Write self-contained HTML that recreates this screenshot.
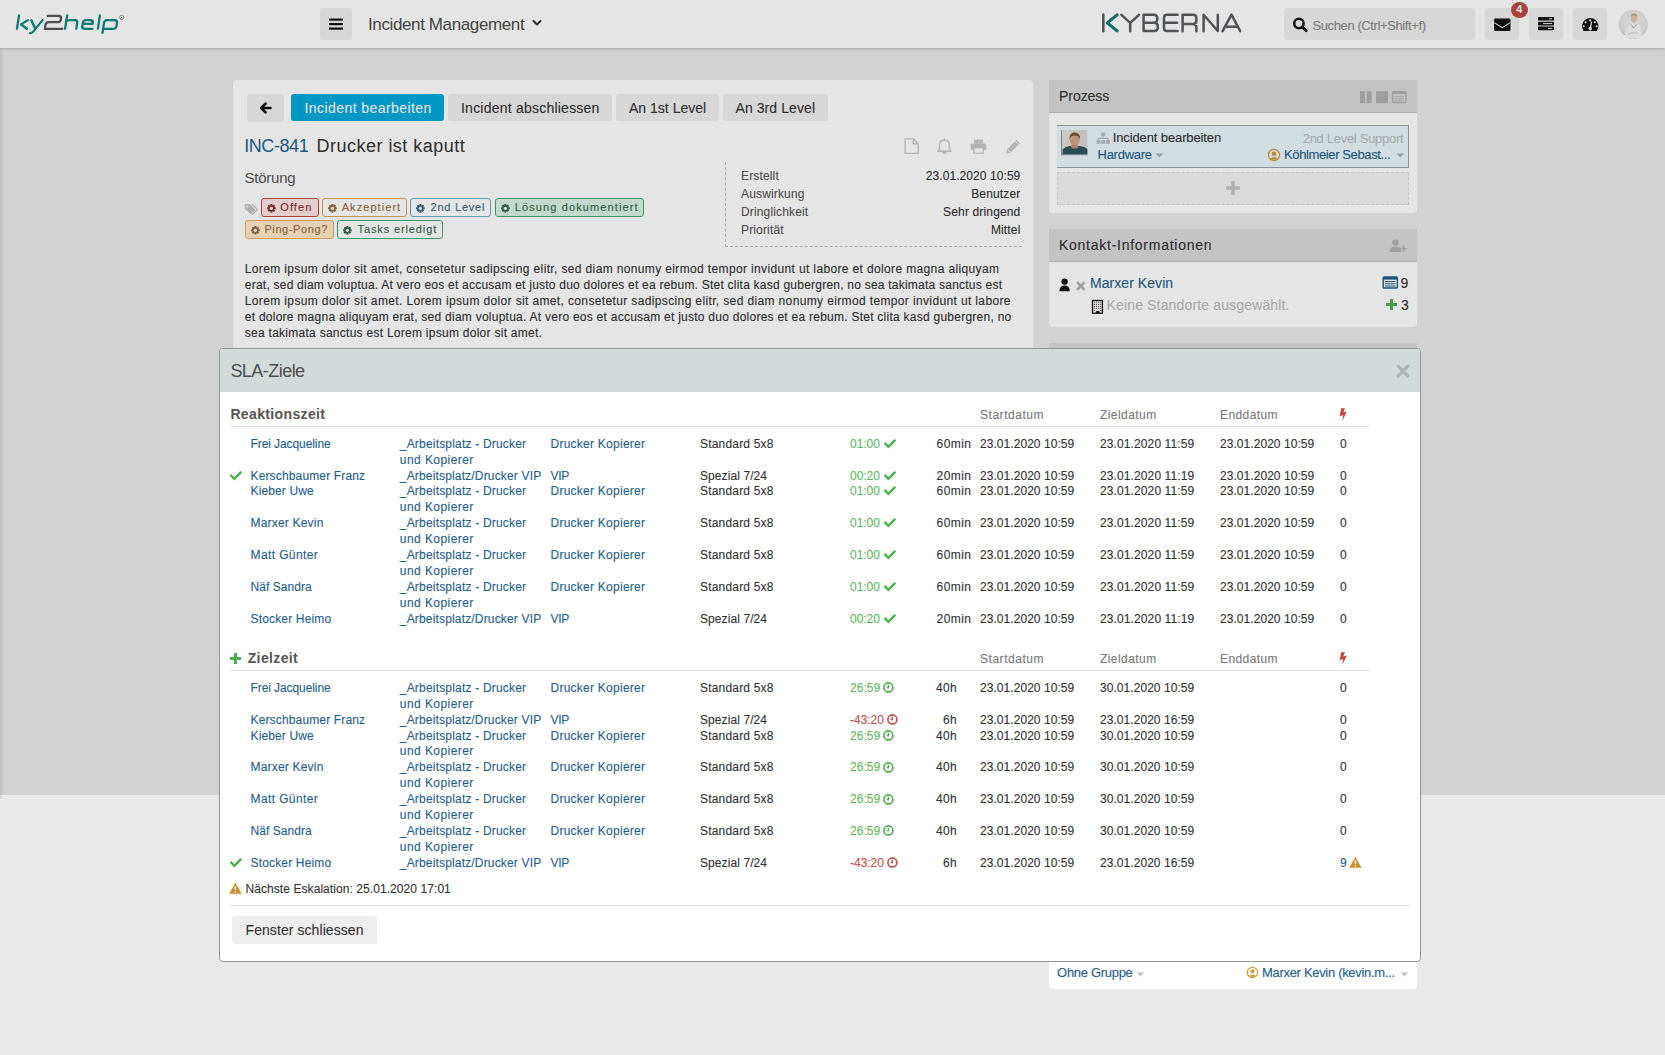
<!DOCTYPE html>
<html><head><meta charset="utf-8"><title>SLA-Ziele</title>
<style>
html,body{margin:0;padding:0;}
body{width:1665px;height:1055px;overflow:hidden;position:relative;background:#eaeaea;font-family:"Liberation Sans", sans-serif;}
.a{position:absolute;}
.t{white-space:pre;}
.s{-webkit-text-stroke:0.1px currentColor;}
svg.a{overflow:visible;}

</style></head><body>
<div class="a" style="left:0px;top:48px;width:4px;height:751px;background:linear-gradient(to right, rgba(0,0,0,0.09), rgba(0,0,0,0));"></div>
<div class="a" style="left:0px;top:0px;width:1665px;height:48px;background:#fff;box-shadow:0 1px 3px rgba(0,0,0,0.2);"></div>
<svg class="a" style="left:0px;top:0px;" width="130" height="48" viewBox="0 0 130 48"><g transform="matrix(1,0,-0.15,1,4.41,0)" fill="none" stroke-width="2.3" stroke-linecap="round" stroke-linejoin="round"><g stroke="#0d877c"><path d="M16.9,15.4 V28.8"/><path d="M26.4,20.2 L20.2,24.4 L26.8,28.8"/><path d="M29.9,20.2 L35,28.3"/><path d="M41.2,20.2 L33.6,31.7 Q32.6,33.1 30.6,33.1"/><path d="M65,15.4 V28.8 M65,21.5 Q66,20.2 68,20.2 H73.6 Q76.2,20.2 76.2,22.8 V28.8"/><path d="M81.8,23.8 H91.8 V22.9 Q91.8,20.2 89.1,20.2 H84.6 Q81.8,20.2 81.8,22.9 V26.1 Q81.8,28.8 84.6,28.8 H92.4"/><path d="M97.8,15.4 V28.8"/><path d="M103,32.9 V22.9 Q103,20.2 105.8,20.2 H113.2 Q116,20.2 116,22.9 V26.1 Q116,28.8 113.2,28.8 H103.2"/></g><path stroke="#565656" d="M45.6,15.8 H56.4 Q59.4,15.8 59.4,18.6 V19.4 Q59.4,22.2 56.4,22.2 H47.8 Q44.8,22.2 44.8,25.2 V28.9 H62.2"/></g><circle cx="121.6" cy="17.4" r="2.1" fill="none" stroke="#888" stroke-width="0.9"/><circle cx="121.6" cy="17.4" r="0.6" fill="#888"/></svg>
<div class="a" style="left:320px;top:8px;width:32px;height:32px;background:#f0f0f0;border-radius:3px;"></div>
<svg class="a" style="left:320px;top:8px;" width="32" height="32" viewBox="0 0 32 32"><rect x="9" y="10.5" width="14" height="2.2" fill="#111"/><rect x="9" y="15" width="14" height="2.2" fill="#111"/><rect x="9" y="19.5" width="14" height="2.2" fill="#111"/></svg>
<div class="a t" style="left:368.00px;top:14.600000000000001px;font-size:17px;line-height:20px;color:#4a4a4a;letter-spacing:-0.383px;">Incident Management</div>
<svg class="a" style="left:530px;top:16px;" width="14" height="14" viewBox="0 0 14 14"><path d="M3.5,5 L7,8.5 L10.5,5" fill="none" stroke="#333" stroke-width="2" stroke-linecap="round" stroke-linejoin="round"/></svg>
<svg class="a" style="left:0px;top:0px;pointer-events:none;" width="1665" height="48" viewBox="0 0 1665 48"><g fill="none" stroke="#5a5c5f" stroke-width="2.5" stroke-linecap="round" stroke-linejoin="round"><path d="M1103.3,14.6 V31.2"/><path d="M1121.4,14.8 L1130.2,22.9 L1139,14.8 M1130.2,22.9 V31.2"/><path d="M1143.6,14.8 V30.9 H1154 Q1157.8,30.9 1157.8,27.2 V26.5 Q1157.8,22.7 1154,22.7 H1143.6 M1143.6,14.8 H1153.8 Q1157.3,14.8 1157.3,18.3 V19.2 Q1157.3,22.7 1153.8,22.7"/><path d="M1177.6,14.8 H1167 Q1164,14.8 1164,17.8 V27.9 Q1164,30.9 1167,30.9 H1177.6 M1164,22.7 H1177.2"/><path d="M1182.6,31.2 V14.8 H1193 Q1196.4,14.8 1196.4,18.2 V20.4 Q1196.4,23.9 1193,23.9 H1182.6 M1192.6,23.9 Q1196.4,23.9 1196.4,27.4 V31.2"/><path d="M1203.6,31.2 V14.8 L1217.8,31 V14.8"/><path d="M1222.6,31.2 L1231.5,14.6 L1240.2,31.2 M1225.2,26.8 H1237.6"/></g><path d="M1117.1,14.9 L1107.3,22.9 L1117.1,30.9" fill="none" stroke="#0b7a70" stroke-width="3.1" stroke-linecap="round" stroke-linejoin="round"/></svg>
<div class="a" style="left:1284px;top:8px;width:191px;height:32px;background:#f0f0f0;border-radius:3px;"></div>
<svg class="a" style="left:1290px;top:14px;" width="22" height="22" viewBox="0 0 22 22"><circle cx="8.9" cy="9.5" r="4.7" fill="none" stroke="#111" stroke-width="2.5"/><path d="M12.3,12.9 L16.2,16.8" stroke="#111" stroke-width="2.8" stroke-linecap="round"/></svg>
<div class="a t s" style="left:1312.50px;top:16px;font-size:13px;line-height:20px;color:#888;letter-spacing:-0.395px;">Suchen (Ctrl+Shift+f)</div>
<div class="a" style="left:1485px;top:8px;width:34px;height:32px;background:#f0f0f0;border-radius:3px;"></div>
<div class="a" style="left:1529px;top:8px;width:34px;height:32px;background:#f0f0f0;border-radius:3px;"></div>
<div class="a" style="left:1573px;top:8px;width:34px;height:32px;background:#f0f0f0;border-radius:3px;"></div>
<svg class="a" style="left:1494px;top:18px;" width="17" height="14" viewBox="0 0 17 14"><rect x="0" y="0.5" width="16.5" height="12.5" rx="1.2" fill="#111"/><path d="M0.2,4.6 L8.25,9.6 L16.3,4.6" fill="none" stroke="#f0f0f0" stroke-width="1.1"/></svg>
<div class="a" style="left:1510.6px;top:1.9px;width:17.4px;height:16.2px;border-radius:50%;background:#b94a48;"></div>
<div class="a t" style="left:1516.34px;top:-1px;font-size:11px;line-height:20px;color:#fff;font-weight:700;">4</div>
<svg class="a" style="left:1538px;top:17px;" width="17" height="14" viewBox="0 0 17 14"><rect x="0" y="0" width="16" height="3.6" rx="0.6" fill="#111"/><rect x="0" y="4.8" width="16" height="3.6" rx="0.6" fill="#111"/><rect x="0" y="9.6" width="16" height="3.6" rx="0.6" fill="#111"/><path d="M11,1.8 H14 M5,6.6 H14 M10,11.4 H14" stroke="#f0f0f0" stroke-width="1"/></svg>
<svg class="a" style="left:1581px;top:17px;" width="19" height="15" viewBox="0 0 19 15"><path d="M2.55,14 A8.2,8.2 0 1 1 15.85,14 Z" fill="#111"/><circle cx="9.2" cy="3.4" r="1.05" fill="#f0f0f0"/><circle cx="4.6" cy="5.2" r="1.05" fill="#f0f0f0"/><circle cx="13.8" cy="5.2" r="1.05" fill="#f0f0f0"/><circle cx="2.8" cy="9.2" r="1.05" fill="#f0f0f0"/><circle cx="15.6" cy="9.2" r="1.05" fill="#f0f0f0"/><path d="M9.2,11.6 L10.6,4.6" stroke="#f0f0f0" stroke-width="1.3"/><circle cx="9.2" cy="11.6" r="1.8" fill="#f0f0f0"/></svg>
<svg class="a" style="left:1618px;top:9px;" width="31" height="31" viewBox="0 0 31 31"><defs><radialGradient id="avg" cx="50%" cy="45%" r="55%"><stop offset="0" stop-color="#f2f2f2"/><stop offset="0.75" stop-color="#e6e6e6"/><stop offset="1" stop-color="#d2d2d2"/></radialGradient></defs><circle cx="15.3" cy="15.4" r="14.4" fill="url(#avg)"/><path d="M6.8,27.4 Q7.6,16.6 12.6,15.2 H19.4 Q23.6,16.6 24,27.6 Q15.6,31.6 6.8,27.4 Z" fill="#f6f6f6"/><path d="M12.8,15.4 L15.6,19 L18.6,15.4" fill="none" stroke="#a8a098" stroke-width="0.8"/><ellipse cx="16" cy="9.4" rx="3.2" ry="4" fill="#e0c4b0"/><path d="M12.6,8.6 Q12.4,4.6 16,4.4 Q19.6,4.6 19.4,8.8 Q18.6,6.2 16,6.2 Q13.4,6.2 12.6,8.6 Z" fill="#b8a48c"/><path d="M9.8,25.6 Q14,22.4 20,24.4" fill="none" stroke="#d6d6d6" stroke-width="1.4"/></svg>
<div class="a" style="left:233px;top:80px;width:800px;height:880px;background:#fff;border-radius:4px;"></div>
<div class="a" style="left:247px;top:94px;width:37px;height:28px;background:#f0f0f0;border-radius:3px;"></div>
<svg class="a" style="left:257px;top:100px;" width="17" height="16" viewBox="0 0 17 16"><path d="M13.5,8 H4.5 M8.6,3.6 L4.2,8 L8.6,12.4" fill="none" stroke="#111" stroke-width="2.6" stroke-linecap="round" stroke-linejoin="round"/></svg>
<div class="a" style="left:291px;top:94px;width:153px;height:27px;background:#00a9db;border-radius:3px;"></div>
<div class="a t s" style="left:304.50px;top:98px;font-size:14px;line-height:20px;color:#fff;letter-spacing:0.428px;">Incident bearbeiten</div>
<div class="a" style="left:448px;top:94px;width:164px;height:27px;background:#f0f0f0;border-radius:3px;"></div>
<div class="a t s" style="left:461.00px;top:98px;font-size:14px;line-height:20px;color:#303030;letter-spacing:0.226px;">Incident abschliessen</div>
<div class="a" style="left:616px;top:94px;width:103px;height:27px;background:#f0f0f0;border-radius:3px;"></div>
<div class="a t s" style="left:629.00px;top:98px;font-size:14px;line-height:20px;color:#303030;letter-spacing:0.013px;">An 1st Level</div>
<div class="a" style="left:723px;top:94px;width:105px;height:27px;background:#f0f0f0;border-radius:3px;"></div>
<div class="a t s" style="left:735.50px;top:98px;font-size:14px;line-height:20px;color:#303030;letter-spacing:0.081px;">An 3rd Level</div>
<div class="a t" style="left:244.20px;top:135.7px;font-size:18px;line-height:20px;color:#1a6496;letter-spacing:-0.422px;">INC-841</div>
<div class="a t" style="left:316.60px;top:135.7px;font-size:18px;line-height:20px;color:#333;letter-spacing:0.474px;">Drucker ist kaputt</div>
<svg class="a" style="left:904px;top:138px;" width="16" height="17" viewBox="0 0 16 17"><path d="M1.2,0.9 H9.6 L14.2,5.5 V15.4 H1.2 Z M9.4,1 V5.7 H14" fill="none" stroke="#c8c8c8" stroke-width="1.4" stroke-linejoin="round"/></svg>
<svg class="a" style="left:936px;top:137px;" width="17" height="18" viewBox="0 0 17 18"><path d="M8.4,1.2 V2.4 M3.4,12.6 V8 Q3.4,3.2 8.4,3.2 Q13.4,3.2 13.4,8 V12.6 L15,14.2 H1.8 Z M6.6,15 Q8.4,17.4 10.2,15" fill="none" stroke="#c8c8c8" stroke-width="1.4" stroke-linejoin="round"/></svg>
<svg class="a" style="left:970px;top:139px;" width="18" height="15" viewBox="0 0 18 15"><rect x="4" y="0.6" width="9" height="4" fill="#c8c8c8"/><rect x="0.8" y="4.4" width="15.4" height="6.8" rx="1.4" fill="#c8c8c8"/><rect x="3.8" y="8.8" width="9.4" height="5.4" fill="#fff" stroke="#c8c8c8" stroke-width="1.2"/></svg>
<svg class="a" style="left:1005px;top:138px;" width="17" height="17" viewBox="0 0 17 17"><path d="M1.4,15.4 L2.2,11.2 L11.6,1.8 L15,5.2 L5.6,14.6 Z" fill="#c8c8c8"/><path d="M2.4,11.4 L5.4,14.4 M10.2,3.2 L13.6,6.6" stroke="#fff" stroke-width="0.8"/></svg>
<div class="a t" style="left:244.60px;top:168.1px;font-size:15px;line-height:20px;color:#555;letter-spacing:-0.258px;">Störung</div>
<div class="a" style="left:725px;top:162px;width:296px;height:84px;border-left:1px dashed #bbb;border-bottom:1px dashed #bbb;"></div>
<div class="a t s" style="left:741.00px;top:166.0px;font-size:12px;line-height:20px;color:#555;letter-spacing:0.150px;">Erstellt</div>
<div class="a t s" style="left:925.80px;top:166.0px;font-size:12px;line-height:20px;color:#303030;letter-spacing:0.072px;">23.01.2020 10:59</div>
<div class="a t s" style="left:741.00px;top:184.0px;font-size:12px;line-height:20px;color:#555;letter-spacing:0.150px;">Auswirkung</div>
<div class="a t s" style="left:971.22px;top:184.0px;font-size:12px;line-height:20px;color:#303030;letter-spacing:0.150px;">Benutzer</div>
<div class="a t s" style="left:741.00px;top:202.0px;font-size:12px;line-height:20px;color:#555;letter-spacing:0.150px;">Dringlichkeit</div>
<div class="a t s" style="left:943.11px;top:202.0px;font-size:12px;line-height:20px;color:#303030;letter-spacing:0.150px;">Sehr dringend</div>
<div class="a t s" style="left:741.00px;top:220.0px;font-size:12px;line-height:20px;color:#555;letter-spacing:0.150px;">Priorität</div>
<div class="a t s" style="left:990.88px;top:220.0px;font-size:12px;line-height:20px;color:#303030;letter-spacing:0.150px;">Mittel</div>
<div class="a" style="left:260.5px;top:198px;width:58.5px;height:19px;background:#fde5e5;border-radius:3px;border:1px solid #c44b48;box-sizing:border-box;"></div>
<svg class="a" style="left:264.5px;top:201px;" width="13" height="13" viewBox="0 0 13 13"><g transform="translate(6.4,7.3)" fill="#86302f"><rect x="-1.05" y="-4.3" width="2.1" height="8.6" transform="rotate(0)" /><rect x="-1.05" y="-4.3" width="2.1" height="8.6" transform="rotate(45)" /><rect x="-1.05" y="-4.3" width="2.1" height="8.6" transform="rotate(90)" /><rect x="-1.05" y="-4.3" width="2.1" height="8.6" transform="rotate(135)" /><circle r="3.0"/><circle r="1.6" fill="#fff"/></g></svg>
<div class="a t s" style="left:280.30px;top:197px;font-size:11px;line-height:20px;color:#86302f;letter-spacing:1.070px;">Offen</div>
<div class="a" style="left:322px;top:198px;width:85px;height:19px;background:#fff;border-radius:3px;border:1px solid #e0a35a;box-sizing:border-box;"></div>
<svg class="a" style="left:326px;top:201px;" width="13" height="13" viewBox="0 0 13 13"><g transform="translate(6.4,7.3)" fill="#97693a"><rect x="-1.05" y="-4.3" width="2.1" height="8.6" transform="rotate(0)" /><rect x="-1.05" y="-4.3" width="2.1" height="8.6" transform="rotate(45)" /><rect x="-1.05" y="-4.3" width="2.1" height="8.6" transform="rotate(90)" /><rect x="-1.05" y="-4.3" width="2.1" height="8.6" transform="rotate(135)" /><circle r="3.0"/><circle r="1.6" fill="#fff"/></g></svg>
<div class="a t s" style="left:341.70px;top:197px;font-size:11px;line-height:20px;color:#97693a;letter-spacing:1.064px;">Akzeptiert</div>
<div class="a" style="left:410.2px;top:198px;width:81.2px;height:19px;background:#fff;border-radius:3px;border:1px solid #68b1c4;box-sizing:border-box;"></div>
<svg class="a" style="left:414.2px;top:201px;" width="13" height="13" viewBox="0 0 13 13"><g transform="translate(6.4,7.3)" fill="#2f6b7c"><rect x="-1.05" y="-4.3" width="2.1" height="8.6" transform="rotate(0)" /><rect x="-1.05" y="-4.3" width="2.1" height="8.6" transform="rotate(45)" /><rect x="-1.05" y="-4.3" width="2.1" height="8.6" transform="rotate(90)" /><rect x="-1.05" y="-4.3" width="2.1" height="8.6" transform="rotate(135)" /><circle r="3.0"/><circle r="1.6" fill="#fff"/></g></svg>
<div class="a t s" style="left:430.50px;top:197px;font-size:11px;line-height:20px;color:#2f6b7c;letter-spacing:0.773px;">2nd Level</div>
<div class="a" style="left:495px;top:198px;width:149px;height:19px;background:#d9f1e4;border-radius:3px;border:1px solid #45ab78;box-sizing:border-box;"></div>
<svg class="a" style="left:499px;top:201px;" width="13" height="13" viewBox="0 0 13 13"><g transform="translate(6.4,7.3)" fill="#2f6447"><rect x="-1.05" y="-4.3" width="2.1" height="8.6" transform="rotate(0)" /><rect x="-1.05" y="-4.3" width="2.1" height="8.6" transform="rotate(45)" /><rect x="-1.05" y="-4.3" width="2.1" height="8.6" transform="rotate(90)" /><rect x="-1.05" y="-4.3" width="2.1" height="8.6" transform="rotate(135)" /><circle r="3.0"/><circle r="1.6" fill="#fff"/></g></svg>
<div class="a t s" style="left:514.80px;top:197px;font-size:11px;line-height:20px;color:#2f6447;letter-spacing:1.109px;">Lösung dokumentiert</div>
<div class="a" style="left:244.6px;top:220px;width:89px;height:19px;background:#ffeacb;border-radius:3px;border:1px solid #e6ab66;box-sizing:border-box;"></div>
<svg class="a" style="left:248.6px;top:223px;" width="13" height="13" viewBox="0 0 13 13"><g transform="translate(6.4,7.3)" fill="#97693a"><rect x="-1.05" y="-4.3" width="2.1" height="8.6" transform="rotate(0)" /><rect x="-1.05" y="-4.3" width="2.1" height="8.6" transform="rotate(45)" /><rect x="-1.05" y="-4.3" width="2.1" height="8.6" transform="rotate(90)" /><rect x="-1.05" y="-4.3" width="2.1" height="8.6" transform="rotate(135)" /><circle r="3.0"/><circle r="1.6" fill="#fff"/></g></svg>
<div class="a t s" style="left:264.40px;top:219px;font-size:11px;line-height:20px;color:#97693a;letter-spacing:0.611px;">Ping-Pong?</div>
<div class="a" style="left:337px;top:220px;width:106.4px;height:19px;background:#fff;border-radius:3px;border:1px solid #45ab78;box-sizing:border-box;"></div>
<svg class="a" style="left:341px;top:223px;" width="13" height="13" viewBox="0 0 13 13"><g transform="translate(6.4,7.3)" fill="#2f6447"><rect x="-1.05" y="-4.3" width="2.1" height="8.6" transform="rotate(0)" /><rect x="-1.05" y="-4.3" width="2.1" height="8.6" transform="rotate(45)" /><rect x="-1.05" y="-4.3" width="2.1" height="8.6" transform="rotate(90)" /><rect x="-1.05" y="-4.3" width="2.1" height="8.6" transform="rotate(135)" /><circle r="3.0"/><circle r="1.6" fill="#fff"/></g></svg>
<div class="a t s" style="left:357.50px;top:219px;font-size:11px;line-height:20px;color:#2f6447;letter-spacing:0.880px;">Tasks erledigt</div>
<svg class="a" style="left:243px;top:202px;" width="16" height="14" viewBox="0 0 16 14"><path d="M1.6,2 H6.6 L12.6,8 L8,12.6 L1.6,6.6 Z" fill="#c4c4c4"/><path d="M9,2 L14.4,7.6 L9.4,12.6" fill="none" stroke="#c4c4c4" stroke-width="1.2"/><circle cx="4.2" cy="4.4" r="1" fill="#fff"/></svg>
<div class="a t s" style="left:244.80px;top:259.0px;font-size:12px;line-height:20px;color:#303030;letter-spacing:0.360px;">Lorem ipsum dolor sit amet, consetetur sadipscing elitr, sed diam nonumy eirmod tempor invidunt ut labore et dolore magna aliquyam</div>
<div class="a t s" style="left:244.80px;top:274.95px;font-size:12px;line-height:20px;color:#303030;letter-spacing:0.228px;">erat, sed diam voluptua. At vero eos et accusam et justo duo dolores et ea rebum. Stet clita kasd gubergren, no sea takimata sanctus est</div>
<div class="a t s" style="left:244.80px;top:290.9px;font-size:12px;line-height:20px;color:#303030;letter-spacing:0.364px;">Lorem ipsum dolor sit amet. Lorem ipsum dolor sit amet, consetetur sadipscing elitr, sed diam nonumy eirmod tempor invidunt ut labore</div>
<div class="a t s" style="left:244.80px;top:306.85px;font-size:12px;line-height:20px;color:#303030;letter-spacing:0.252px;">et dolore magna aliquyam erat, sed diam voluptua. At vero eos et accusam et justo duo dolores et ea rebum. Stet clita kasd gubergren, no</div>
<div class="a t s" style="left:244.80px;top:322.8px;font-size:12px;line-height:20px;color:#303030;letter-spacing:0.268px;">sea takimata sanctus est Lorem ipsum dolor sit amet.</div>
<div class="a" style="left:1049px;top:80px;width:368px;height:132.5px;background:#fff;border-radius:0 0 4px 4px;"></div>
<div class="a" style="left:1049px;top:80px;width:368px;height:33px;background:#dadada;border-bottom:1.5px solid #bfbfbf;box-sizing:border-box;"></div>
<div class="a t s" style="left:1059.00px;top:85.9px;font-size:14px;line-height:20px;color:#303030;letter-spacing:-0.046px;">Prozess</div>
<svg class="a" style="left:1359px;top:90px;" width="50" height="14" viewBox="0 0 50 14"><rect x="1" y="1.2" width="5" height="12" fill="#b0b0b0"/><rect x="7.6" y="1.2" width="5" height="12" fill="#b0b0b0"/><rect x="17" y="1.2" width="12" height="12" fill="#b0b0b0"/><rect x="33.6" y="1.6" width="13.4" height="11" rx="1" fill="none" stroke="#b0b0b0" stroke-width="1.4"/><rect x="33.6" y="1.6" width="13.4" height="2.4" fill="#b0b0b0"/><path d="M35.6,6.4 H45 M35.6,8.6 H45 M35.6,10.8 H45" stroke="#b0b0b0" stroke-width="0.9"/></svg>
<div class="a" style="left:1057px;top:125px;width:352px;height:43px;box-sizing:border-box;background:#eaf7fc;border:1px solid #9da2a5;border-left:none;"></div>
<svg class="a" style="left:1061px;top:130px;" width="27" height="25" viewBox="0 0 27 25"><defs><linearGradient id="phbg" x1="0" x2="1"><stop offset="0" stop-color="#e6e2dc"/><stop offset="1" stop-color="#d8d6d0"/></linearGradient></defs><rect x="1.4" y="0" width="25" height="24.4" fill="url(#phbg)"/><rect x="0" y="0" width="1.2" height="25.2" fill="#8d9194"/><rect x="0" y="24.2" width="26.5" height="1" fill="#8d9194"/><path d="M1.6,24.2 V19.2 Q4,16.6 9,16 H18.6 Q24,16.6 26.4,19 V24.2 Z" fill="#2f5560"/><path d="M10.8,14 H16.4 L17.4,17.4 Q13.6,19.8 9.8,17.4 Z" fill="#c0907a"/><ellipse cx="13.6" cy="9.6" rx="5" ry="6.2" fill="#d2a48a"/><path d="M8.4,9.4 Q7.8,3 13.6,2.6 Q19.6,3 19,9.6 Q18,5.8 13.8,5.6 Q9.6,5.6 8.4,9.4 Z" fill="#7a5236"/></svg>
<svg class="a" style="left:1096px;top:132px;" width="15" height="13" viewBox="0 0 15 13"><rect x="5.2" y="0.6" width="4" height="3.4" fill="#b8bcbe"/><path d="M7.2,4 V6.4 M2.4,8 V6.4 H12 V8" fill="none" stroke="#b8bcbe" stroke-width="1.2"/><rect x="0.6" y="8.2" width="3.8" height="3.6" fill="#b8bcbe"/><rect x="5.2" y="8.2" width="4" height="3.6" fill="#b8bcbe"/><rect x="10" y="8.2" width="3.8" height="3.6" fill="#b8bcbe"/></svg>
<div class="a t s" style="left:1112.70px;top:128px;font-size:13px;line-height:20px;color:#303030;letter-spacing:-0.116px;">Incident bearbeiten</div>
<div class="a t s" style="left:1097.50px;top:144.9px;font-size:13px;line-height:20px;color:#1d5d8d;letter-spacing:-0.251px;">Hardware</div>
<svg class="a" style="left:1155px;top:153px;" width="9" height="5" viewBox="0 0 9 5"><path d="M0.6,0.6 H8.2 L4.4,4.4 Z" fill="#a9b0b4"/></svg>
<div class="a t s" style="left:1302.70px;top:129px;font-size:13px;line-height:20px;color:#b9bdbf;letter-spacing:-0.289px;">2nd Level Support</div>
<svg class="a" style="left:1266px;top:147px;" width="16" height="16" viewBox="0 0 16 16"><circle cx="8" cy="8" r="5.6000000000000005" fill="none" stroke="#d19a38" stroke-width="1.2"/><circle cx="8" cy="6.636" r="2.2319999999999998" fill="#d19a38"/><path d="M4.156000000000001,11.844 Q8,8.31 11.844,11.844 Q8,13.89 4.156000000000001,11.844 Z" fill="#d19a38"/></svg>
<div class="a t s" style="left:1284.00px;top:144.9px;font-size:13px;line-height:20px;color:#1d5d8d;letter-spacing:-0.381px;">Köhlmeier Sebast...</div>
<svg class="a" style="left:1396px;top:153px;" width="9" height="5" viewBox="0 0 9 5"><path d="M0.6,0.6 H8.2 L4.4,4.4 Z" fill="#a9b0b4"/></svg>
<div class="a" style="left:1057px;top:172px;width:352px;height:32.5px;background:#f3f3f3;border:1px dashed #dadada;box-sizing:border-box;"></div>
<svg class="a" style="left:1225px;top:180px;" width="16" height="16" viewBox="0 0 16 16"><path d="M8,1 V15 M1,8 H15" stroke="#c2c2c2" stroke-width="3.6"/></svg>
<div class="a" style="left:1049px;top:229px;width:368px;height:97.6px;background:#fff;border-radius:0 0 4px 4px;"></div>
<div class="a" style="left:1049px;top:229px;width:368px;height:33px;background:#dadada;border-bottom:1.5px solid #bfbfbf;box-sizing:border-box;"></div>
<div class="a t s" style="left:1059.00px;top:234.9px;font-size:14px;line-height:20px;color:#303030;letter-spacing:0.738px;">Kontakt-Informationen</div>
<svg class="a" style="left:1389px;top:239px;" width="19" height="14" viewBox="0 0 19 14"><circle cx="6.4" cy="3.6" r="3.2" fill="#b0b0b0"/><path d="M0.6,13 Q0.6,7.6 6.4,7.6 Q12.2,7.6 12.2,13 Z" fill="#b0b0b0"/><path d="M14.6,6.4 V12.6 M11.5,9.5 H17.7" stroke="#b0b0b0" stroke-width="1.6"/></svg>
<svg class="a" style="left:1059px;top:278px;" width="12" height="14" viewBox="0 0 12 14"><circle cx="5.6" cy="3.6" r="3.2" fill="#111"/><path d="M0.4,13.2 Q0.4,7.4 5.6,7.4 Q10.8,7.4 10.8,13.2 Z" fill="#111"/></svg>
<svg class="a" style="left:1075px;top:280px;" width="12" height="12" viewBox="0 0 12 12"><path d="M2,2.2 L9.6,9.8 M9.6,2.2 L2,9.8" stroke="#b0b0b0" stroke-width="2.6"/></svg>
<div class="a t s" style="left:1090.00px;top:273px;font-size:14px;line-height:20px;color:#1d5d8d;letter-spacing:0.057px;">Marxer Kevin</div>
<svg class="a" style="left:1382px;top:276px;" width="17" height="13" viewBox="0 0 17 13"><rect x="1.2" y="1" width="14.2" height="11" rx="1" fill="none" stroke="#1d5d8d" stroke-width="1.4"/><rect x="1.2" y="1" width="14.2" height="2.6" fill="#1d5d8d"/><path d="M3,5.6 H13.6 M3,7.8 H13.6 M3,10 H13.6" stroke="#1d5d8d" stroke-width="1"/></svg>
<div class="a t s" style="left:1400.50px;top:273px;font-size:14px;line-height:20px;color:#303030;">9</div>
<svg class="a" style="left:1091px;top:299px;" width="13" height="16" viewBox="0 0 13 16"><rect x="1.5" y="1.5" width="9.9" height="12.7" fill="#fff" stroke="#111" stroke-width="1.3"/><rect x="2.95" y="2.6500000000000004" width="1.1" height="1.1" fill="#6a4a4a"/><rect x="2.95" y="4.8500000000000005" width="1.1" height="1.1" fill="#6a4a4a"/><rect x="2.95" y="6.8500000000000005" width="1.1" height="1.1" fill="#6a4a4a"/><rect x="2.95" y="8.75" width="1.1" height="1.1" fill="#6a4a4a"/><rect x="4.95" y="2.6500000000000004" width="1.1" height="1.1" fill="#6a4a4a"/><rect x="4.95" y="4.8500000000000005" width="1.1" height="1.1" fill="#6a4a4a"/><rect x="4.95" y="6.8500000000000005" width="1.1" height="1.1" fill="#6a4a4a"/><rect x="4.95" y="8.75" width="1.1" height="1.1" fill="#6a4a4a"/><rect x="6.95" y="2.6500000000000004" width="1.1" height="1.1" fill="#6a4a4a"/><rect x="6.95" y="4.8500000000000005" width="1.1" height="1.1" fill="#6a4a4a"/><rect x="6.95" y="6.8500000000000005" width="1.1" height="1.1" fill="#6a4a4a"/><rect x="6.95" y="8.75" width="1.1" height="1.1" fill="#6a4a4a"/><rect x="9.049999999999999" y="2.6500000000000004" width="1.1" height="1.1" fill="#6a4a4a"/><rect x="9.049999999999999" y="4.8500000000000005" width="1.1" height="1.1" fill="#6a4a4a"/><rect x="9.049999999999999" y="6.8500000000000005" width="1.1" height="1.1" fill="#6a4a4a"/><rect x="9.049999999999999" y="8.75" width="1.1" height="1.1" fill="#6a4a4a"/><rect x="2.95" y="10.9" width="1.1" height="1.1" fill="#6a4a4a"/><rect x="9.049999999999999" y="10.9" width="1.1" height="1.1" fill="#6a4a4a"/><rect x="5.1" y="12" width="3.4" height="2.4" fill="#111"/></svg>
<div class="a t s" style="left:1106.50px;top:294.8px;font-size:14px;line-height:20px;color:#bcbcbc;letter-spacing:0.153px;">Keine Standorte ausgewählt.</div>
<svg class="a" style="left:1385px;top:298px;" width="13" height="13" viewBox="0 0 13 13"><path d="M6.5,1 V12 M1,6.5 H12" stroke="#4cae4c" stroke-width="3"/></svg>
<div class="a t s" style="left:1401.00px;top:295px;font-size:14px;line-height:20px;color:#303030;">3</div>
<div class="a" style="left:1049px;top:343px;width:368px;height:645.6px;background:#fff;border-radius:0 0 4px 4px;"></div>
<div class="a" style="left:1049px;top:343px;width:368px;height:33px;background:#dadada;"></div>
<div class="a t s" style="left:1057.10px;top:962.5px;font-size:13px;line-height:20px;color:#1d5d8d;letter-spacing:-0.308px;">Ohne Gruppe</div>
<svg class="a" style="left:1136.4px;top:972px;" width="9" height="5" viewBox="0 0 9 5"><path d="M0.6,0.6 H8.2 L4.4,4.4 Z" fill="#c0c0c0"/></svg>
<svg class="a" style="left:1245px;top:965px;" width="15" height="15" viewBox="0 0 15 15"><circle cx="7.5" cy="7.5" r="5.2" fill="none" stroke="#d19a38" stroke-width="1.2"/><circle cx="7.5" cy="6.224" r="2.088" fill="#d19a38"/><path d="M3.904,11.096 Q7.5,7.79 11.096,11.096 Q7.5,13.01 3.904,11.096 Z" fill="#d19a38"/></svg>
<div class="a t s" style="left:1262.00px;top:962.5px;font-size:13px;line-height:20px;color:#1d5d8d;letter-spacing:-0.311px;">Marxer Kevin (kevin.m...</div>
<svg class="a" style="left:1400.4px;top:972px;" width="9" height="5" viewBox="0 0 9 5"><path d="M0.6,0.6 H8.2 L4.4,4.4 Z" fill="#c0c0c0"/></svg>
<div class="a" style="left:0px;top:0px;width:1665px;height:795px;background:rgba(0,0,0,0.1);"></div>
<div class="a" style="left:219px;top:348px;width:1202px;height:614px;box-sizing:border-box;border:1px solid #949494;border-radius:4px;background:#fff;overflow:hidden;"><div style="position:absolute;left:0;top:0;right:0;height:43px;background:#d2dbda;"></div></div>
<div class="a t" style="left:230.40px;top:360.8px;font-size:18px;line-height:20px;color:#4d4d4d;letter-spacing:-0.541px;">SLA-Ziele</div>
<svg class="a" style="left:1396px;top:364px;" width="14" height="14" viewBox="0 0 14 14"><path d="M2.2,2.2 L11.8,11.8 M11.8,2.2 L2.2,11.8" stroke="#abb3b3" stroke-width="3.2" stroke-linecap="round"/></svg>
<div class="a t" style="left:230.40px;top:403.8px;font-size:14px;line-height:20px;color:#555;font-weight:700;letter-spacing:0.362px;">Reaktionszeit</div>
<div class="a t s" style="left:980.00px;top:405.0px;font-size:12px;line-height:20px;color:#777;letter-spacing:0.533px;">Startdatum</div>
<div class="a t s" style="left:1100.00px;top:405.0px;font-size:12px;line-height:20px;color:#777;letter-spacing:0.439px;">Zieldatum</div>
<div class="a t s" style="left:1220.00px;top:405.0px;font-size:12px;line-height:20px;color:#777;letter-spacing:0.400px;">Enddatum</div>
<svg class="a" style="left:1339px;top:407.8px;" width="9" height="14" viewBox="0 0 9 14"><path d="M2.2,0.2 L5.9,0.2 L4.3,4.6 L7.9,3.5 L3.1,13.3 L4.3,7.2 L0.6,8.0 Z" fill="#c9413c"/></svg>
<div class="a" style="left:230px;top:425.8px;width:1140px;height:1.2px;background:#dddddd;"></div>
<div class="a t s" style="left:250.50px;top:433.7px;font-size:12px;line-height:20px;color:#1d5d8d;letter-spacing:-0.084px;">Frei Jacqueline</div>
<div class="a t s" style="left:399.80px;top:433.7px;font-size:12px;line-height:20px;color:#1d5d8d;letter-spacing:0.193px;">_Arbeitsplatz - Drucker</div>
<div class="a t s" style="left:399.80px;top:449.59999999999997px;font-size:12px;line-height:20px;color:#1d5d8d;letter-spacing:0.435px;">und Kopierer</div>
<div class="a t s" style="left:550.50px;top:433.7px;font-size:12px;line-height:20px;color:#1d5d8d;letter-spacing:0.253px;">Drucker Kopierer</div>
<div class="a t s" style="left:700.00px;top:433.7px;font-size:12px;line-height:20px;color:#303030;letter-spacing:0.183px;">Standard 5x8</div>
<div class="a t s" style="left:850.10px;top:433.7px;font-size:12px;line-height:20px;color:#5cb85c;letter-spacing:-0.058px;">01:00</div>
<svg class="a" style="left:883.6px;top:438.7px;" width="12" height="10" viewBox="0 0 12 10"><path d="M1.4,4.8 L4.4,7.8 L10.4,1.8" fill="none" stroke="#4cae4c" stroke-width="2.5" stroke-linecap="square"/></svg>
<div class="a t s" style="left:936.60px;top:433.7px;font-size:12px;line-height:20px;color:#303030;letter-spacing:0.428px;">60min</div>
<div class="a t s" style="left:980.00px;top:433.7px;font-size:12px;line-height:20px;color:#303030;letter-spacing:0.052px;">23.01.2020 10:59</div>
<div class="a t s" style="left:1100.00px;top:433.7px;font-size:12px;line-height:20px;color:#303030;letter-spacing:0.111px;">23.01.2020 11:59</div>
<div class="a t s" style="left:1220.00px;top:433.7px;font-size:12px;line-height:20px;color:#303030;letter-spacing:0.052px;">23.01.2020 10:59</div>
<div class="a t s" style="left:1340.00px;top:433.7px;font-size:12px;line-height:20px;color:#303030;">0</div>
<svg class="a" style="left:230px;top:470.5px;" width="12" height="10" viewBox="0 0 12 10"><path d="M1.4,4.8 L4.4,7.8 L10.4,1.8" fill="none" stroke="#4cae4c" stroke-width="2.5" stroke-linecap="square"/></svg>
<div class="a t s" style="left:250.50px;top:465.5px;font-size:12px;line-height:20px;color:#1d5d8d;letter-spacing:0.150px;">Kerschbaumer Franz</div>
<div class="a t s" style="left:399.80px;top:465.5px;font-size:12px;line-height:20px;color:#1d5d8d;letter-spacing:0.167px;">_Arbeitsplatz/Drucker VIP</div>
<div class="a t s" style="left:550.50px;top:465.5px;font-size:12px;line-height:20px;color:#1d5d8d;letter-spacing:-0.272px;">VIP</div>
<div class="a t s" style="left:700.00px;top:465.5px;font-size:12px;line-height:20px;color:#303030;letter-spacing:0.087px;">Spezial 7/24</div>
<div class="a t s" style="left:850.10px;top:465.5px;font-size:12px;line-height:20px;color:#5cb85c;letter-spacing:-0.058px;">00:20</div>
<svg class="a" style="left:883.6px;top:470.5px;" width="12" height="10" viewBox="0 0 12 10"><path d="M1.4,4.8 L4.4,7.8 L10.4,1.8" fill="none" stroke="#4cae4c" stroke-width="2.5" stroke-linecap="square"/></svg>
<div class="a t s" style="left:936.60px;top:465.5px;font-size:12px;line-height:20px;color:#303030;letter-spacing:0.428px;">20min</div>
<div class="a t s" style="left:980.00px;top:465.5px;font-size:12px;line-height:20px;color:#303030;letter-spacing:0.052px;">23.01.2020 10:59</div>
<div class="a t s" style="left:1100.00px;top:465.5px;font-size:12px;line-height:20px;color:#303030;letter-spacing:0.111px;">23.01.2020 11:19</div>
<div class="a t s" style="left:1220.00px;top:465.5px;font-size:12px;line-height:20px;color:#303030;letter-spacing:0.052px;">23.01.2020 10:59</div>
<div class="a t s" style="left:1340.00px;top:465.5px;font-size:12px;line-height:20px;color:#303030;">0</div>
<div class="a t s" style="left:250.50px;top:481.4px;font-size:12px;line-height:20px;color:#1d5d8d;letter-spacing:0.130px;">Kieber Uwe</div>
<div class="a t s" style="left:399.80px;top:481.4px;font-size:12px;line-height:20px;color:#1d5d8d;letter-spacing:0.193px;">_Arbeitsplatz - Drucker</div>
<div class="a t s" style="left:399.80px;top:497.29999999999995px;font-size:12px;line-height:20px;color:#1d5d8d;letter-spacing:0.435px;">und Kopierer</div>
<div class="a t s" style="left:550.50px;top:481.4px;font-size:12px;line-height:20px;color:#1d5d8d;letter-spacing:0.253px;">Drucker Kopierer</div>
<div class="a t s" style="left:700.00px;top:481.4px;font-size:12px;line-height:20px;color:#303030;letter-spacing:0.183px;">Standard 5x8</div>
<div class="a t s" style="left:850.10px;top:481.4px;font-size:12px;line-height:20px;color:#5cb85c;letter-spacing:-0.058px;">01:00</div>
<svg class="a" style="left:883.6px;top:486.4px;" width="12" height="10" viewBox="0 0 12 10"><path d="M1.4,4.8 L4.4,7.8 L10.4,1.8" fill="none" stroke="#4cae4c" stroke-width="2.5" stroke-linecap="square"/></svg>
<div class="a t s" style="left:936.60px;top:481.4px;font-size:12px;line-height:20px;color:#303030;letter-spacing:0.428px;">60min</div>
<div class="a t s" style="left:980.00px;top:481.4px;font-size:12px;line-height:20px;color:#303030;letter-spacing:0.052px;">23.01.2020 10:59</div>
<div class="a t s" style="left:1100.00px;top:481.4px;font-size:12px;line-height:20px;color:#303030;letter-spacing:0.111px;">23.01.2020 11:59</div>
<div class="a t s" style="left:1220.00px;top:481.4px;font-size:12px;line-height:20px;color:#303030;letter-spacing:0.052px;">23.01.2020 10:59</div>
<div class="a t s" style="left:1340.00px;top:481.4px;font-size:12px;line-height:20px;color:#303030;">0</div>
<div class="a t s" style="left:250.50px;top:513.2px;font-size:12px;line-height:20px;color:#1d5d8d;letter-spacing:0.192px;">Marxer Kevin</div>
<div class="a t s" style="left:399.80px;top:513.2px;font-size:12px;line-height:20px;color:#1d5d8d;letter-spacing:0.193px;">_Arbeitsplatz - Drucker</div>
<div class="a t s" style="left:399.80px;top:529.1px;font-size:12px;line-height:20px;color:#1d5d8d;letter-spacing:0.435px;">und Kopierer</div>
<div class="a t s" style="left:550.50px;top:513.2px;font-size:12px;line-height:20px;color:#1d5d8d;letter-spacing:0.253px;">Drucker Kopierer</div>
<div class="a t s" style="left:700.00px;top:513.2px;font-size:12px;line-height:20px;color:#303030;letter-spacing:0.183px;">Standard 5x8</div>
<div class="a t s" style="left:850.10px;top:513.2px;font-size:12px;line-height:20px;color:#5cb85c;letter-spacing:-0.058px;">01:00</div>
<svg class="a" style="left:883.6px;top:518.2px;" width="12" height="10" viewBox="0 0 12 10"><path d="M1.4,4.8 L4.4,7.8 L10.4,1.8" fill="none" stroke="#4cae4c" stroke-width="2.5" stroke-linecap="square"/></svg>
<div class="a t s" style="left:936.60px;top:513.2px;font-size:12px;line-height:20px;color:#303030;letter-spacing:0.428px;">60min</div>
<div class="a t s" style="left:980.00px;top:513.2px;font-size:12px;line-height:20px;color:#303030;letter-spacing:0.052px;">23.01.2020 10:59</div>
<div class="a t s" style="left:1100.00px;top:513.2px;font-size:12px;line-height:20px;color:#303030;letter-spacing:0.111px;">23.01.2020 11:59</div>
<div class="a t s" style="left:1220.00px;top:513.2px;font-size:12px;line-height:20px;color:#303030;letter-spacing:0.052px;">23.01.2020 10:59</div>
<div class="a t s" style="left:1340.00px;top:513.2px;font-size:12px;line-height:20px;color:#303030;">0</div>
<div class="a t s" style="left:250.50px;top:545.0px;font-size:12px;line-height:20px;color:#1d5d8d;letter-spacing:0.394px;">Matt Günter</div>
<div class="a t s" style="left:399.80px;top:545.0px;font-size:12px;line-height:20px;color:#1d5d8d;letter-spacing:0.193px;">_Arbeitsplatz - Drucker</div>
<div class="a t s" style="left:399.80px;top:560.9px;font-size:12px;line-height:20px;color:#1d5d8d;letter-spacing:0.435px;">und Kopierer</div>
<div class="a t s" style="left:550.50px;top:545.0px;font-size:12px;line-height:20px;color:#1d5d8d;letter-spacing:0.253px;">Drucker Kopierer</div>
<div class="a t s" style="left:700.00px;top:545.0px;font-size:12px;line-height:20px;color:#303030;letter-spacing:0.183px;">Standard 5x8</div>
<div class="a t s" style="left:850.10px;top:545.0px;font-size:12px;line-height:20px;color:#5cb85c;letter-spacing:-0.058px;">01:00</div>
<svg class="a" style="left:883.6px;top:550.0px;" width="12" height="10" viewBox="0 0 12 10"><path d="M1.4,4.8 L4.4,7.8 L10.4,1.8" fill="none" stroke="#4cae4c" stroke-width="2.5" stroke-linecap="square"/></svg>
<div class="a t s" style="left:936.60px;top:545.0px;font-size:12px;line-height:20px;color:#303030;letter-spacing:0.428px;">60min</div>
<div class="a t s" style="left:980.00px;top:545.0px;font-size:12px;line-height:20px;color:#303030;letter-spacing:0.052px;">23.01.2020 10:59</div>
<div class="a t s" style="left:1100.00px;top:545.0px;font-size:12px;line-height:20px;color:#303030;letter-spacing:0.111px;">23.01.2020 11:59</div>
<div class="a t s" style="left:1220.00px;top:545.0px;font-size:12px;line-height:20px;color:#303030;letter-spacing:0.052px;">23.01.2020 10:59</div>
<div class="a t s" style="left:1340.00px;top:545.0px;font-size:12px;line-height:20px;color:#303030;">0</div>
<div class="a t s" style="left:250.50px;top:576.8px;font-size:12px;line-height:20px;color:#1d5d8d;letter-spacing:0.044px;">Näf Sandra</div>
<div class="a t s" style="left:399.80px;top:576.8px;font-size:12px;line-height:20px;color:#1d5d8d;letter-spacing:0.193px;">_Arbeitsplatz - Drucker</div>
<div class="a t s" style="left:399.80px;top:592.6999999999999px;font-size:12px;line-height:20px;color:#1d5d8d;letter-spacing:0.435px;">und Kopierer</div>
<div class="a t s" style="left:550.50px;top:576.8px;font-size:12px;line-height:20px;color:#1d5d8d;letter-spacing:0.253px;">Drucker Kopierer</div>
<div class="a t s" style="left:700.00px;top:576.8px;font-size:12px;line-height:20px;color:#303030;letter-spacing:0.183px;">Standard 5x8</div>
<div class="a t s" style="left:850.10px;top:576.8px;font-size:12px;line-height:20px;color:#5cb85c;letter-spacing:-0.058px;">01:00</div>
<svg class="a" style="left:883.6px;top:581.8px;" width="12" height="10" viewBox="0 0 12 10"><path d="M1.4,4.8 L4.4,7.8 L10.4,1.8" fill="none" stroke="#4cae4c" stroke-width="2.5" stroke-linecap="square"/></svg>
<div class="a t s" style="left:936.60px;top:576.8px;font-size:12px;line-height:20px;color:#303030;letter-spacing:0.428px;">60min</div>
<div class="a t s" style="left:980.00px;top:576.8px;font-size:12px;line-height:20px;color:#303030;letter-spacing:0.052px;">23.01.2020 10:59</div>
<div class="a t s" style="left:1100.00px;top:576.8px;font-size:12px;line-height:20px;color:#303030;letter-spacing:0.111px;">23.01.2020 11:59</div>
<div class="a t s" style="left:1220.00px;top:576.8px;font-size:12px;line-height:20px;color:#303030;letter-spacing:0.052px;">23.01.2020 10:59</div>
<div class="a t s" style="left:1340.00px;top:576.8px;font-size:12px;line-height:20px;color:#303030;">0</div>
<div class="a t s" style="left:250.50px;top:608.6px;font-size:12px;line-height:20px;color:#1d5d8d;letter-spacing:0.166px;">Stocker Heimo</div>
<div class="a t s" style="left:399.80px;top:608.6px;font-size:12px;line-height:20px;color:#1d5d8d;letter-spacing:0.167px;">_Arbeitsplatz/Drucker VIP</div>
<div class="a t s" style="left:550.50px;top:608.6px;font-size:12px;line-height:20px;color:#1d5d8d;letter-spacing:-0.272px;">VIP</div>
<div class="a t s" style="left:700.00px;top:608.6px;font-size:12px;line-height:20px;color:#303030;letter-spacing:0.087px;">Spezial 7/24</div>
<div class="a t s" style="left:850.10px;top:608.6px;font-size:12px;line-height:20px;color:#5cb85c;letter-spacing:-0.058px;">00:20</div>
<svg class="a" style="left:883.6px;top:613.6px;" width="12" height="10" viewBox="0 0 12 10"><path d="M1.4,4.8 L4.4,7.8 L10.4,1.8" fill="none" stroke="#4cae4c" stroke-width="2.5" stroke-linecap="square"/></svg>
<div class="a t s" style="left:936.60px;top:608.6px;font-size:12px;line-height:20px;color:#303030;letter-spacing:0.428px;">20min</div>
<div class="a t s" style="left:980.00px;top:608.6px;font-size:12px;line-height:20px;color:#303030;letter-spacing:0.052px;">23.01.2020 10:59</div>
<div class="a t s" style="left:1100.00px;top:608.6px;font-size:12px;line-height:20px;color:#303030;letter-spacing:0.111px;">23.01.2020 11:19</div>
<div class="a t s" style="left:1220.00px;top:608.6px;font-size:12px;line-height:20px;color:#303030;letter-spacing:0.052px;">23.01.2020 10:59</div>
<div class="a t s" style="left:1340.00px;top:608.6px;font-size:12px;line-height:20px;color:#303030;">0</div>
<svg class="a" style="left:229px;top:651.9px;" width="13" height="13" viewBox="0 0 13 13"><path d="M6.5,1 V12 M1,6.5 H12" stroke="#4cae4c" stroke-width="3"/></svg>
<div class="a t" style="left:247.70px;top:647.9px;font-size:14px;line-height:20px;color:#555;font-weight:700;letter-spacing:0.376px;">Zielzeit</div>
<div class="a t s" style="left:980.00px;top:649.1px;font-size:12px;line-height:20px;color:#777;letter-spacing:0.533px;">Startdatum</div>
<div class="a t s" style="left:1100.00px;top:649.1px;font-size:12px;line-height:20px;color:#777;letter-spacing:0.439px;">Zieldatum</div>
<div class="a t s" style="left:1220.00px;top:649.1px;font-size:12px;line-height:20px;color:#777;letter-spacing:0.400px;">Enddatum</div>
<svg class="a" style="left:1339px;top:651.9px;" width="9" height="14" viewBox="0 0 9 14"><path d="M2.2,0.2 L5.9,0.2 L4.3,4.6 L7.9,3.5 L3.1,13.3 L4.3,7.2 L0.6,8.0 Z" fill="#c9413c"/></svg>
<div class="a" style="left:230px;top:669.9px;width:1140px;height:1.2px;background:#dddddd;"></div>
<div class="a t s" style="left:250.50px;top:677.8px;font-size:12px;line-height:20px;color:#1d5d8d;letter-spacing:-0.084px;">Frei Jacqueline</div>
<div class="a t s" style="left:399.80px;top:677.8px;font-size:12px;line-height:20px;color:#1d5d8d;letter-spacing:0.193px;">_Arbeitsplatz - Drucker</div>
<div class="a t s" style="left:399.80px;top:693.6999999999999px;font-size:12px;line-height:20px;color:#1d5d8d;letter-spacing:0.435px;">und Kopierer</div>
<div class="a t s" style="left:550.50px;top:677.8px;font-size:12px;line-height:20px;color:#1d5d8d;letter-spacing:0.253px;">Drucker Kopierer</div>
<div class="a t s" style="left:700.00px;top:677.8px;font-size:12px;line-height:20px;color:#303030;letter-spacing:0.183px;">Standard 5x8</div>
<div class="a t s" style="left:850.10px;top:677.8px;font-size:12px;line-height:20px;color:#5cb85c;letter-spacing:0.017px;">26:59</div>
<svg class="a" style="left:883.4px;top:682.1999999999999px;" width="12" height="12" viewBox="0 0 12 12"><circle cx="5.4" cy="5.4" r="4.5" fill="none" stroke="#4cae4c" stroke-width="1.6"/><path d="M5.4,2.8 V5.6 H3.6" fill="none" stroke="#4cae4c" stroke-width="1.4"/></svg>
<div class="a t s" style="left:936.00px;top:677.8px;font-size:12px;line-height:20px;color:#303030;letter-spacing:0.334px;">40h</div>
<div class="a t s" style="left:980.00px;top:677.8px;font-size:12px;line-height:20px;color:#303030;letter-spacing:0.052px;">23.01.2020 10:59</div>
<div class="a t s" style="left:1100.00px;top:677.8px;font-size:12px;line-height:20px;color:#303030;letter-spacing:0.052px;">30.01.2020 10:59</div>
<div class="a t s" style="left:1340.00px;top:677.8px;font-size:12px;line-height:20px;color:#303030;">0</div>
<div class="a t s" style="left:250.50px;top:709.5999999999999px;font-size:12px;line-height:20px;color:#1d5d8d;letter-spacing:0.150px;">Kerschbaumer Franz</div>
<div class="a t s" style="left:399.80px;top:709.5999999999999px;font-size:12px;line-height:20px;color:#1d5d8d;letter-spacing:0.167px;">_Arbeitsplatz/Drucker VIP</div>
<div class="a t s" style="left:550.50px;top:709.5999999999999px;font-size:12px;line-height:20px;color:#1d5d8d;letter-spacing:-0.272px;">VIP</div>
<div class="a t s" style="left:700.00px;top:709.5999999999999px;font-size:12px;line-height:20px;color:#303030;letter-spacing:0.087px;">Spezial 7/24</div>
<div class="a t s" style="left:850.10px;top:709.5999999999999px;font-size:12px;line-height:20px;color:#c0504d;letter-spacing:-0.046px;">-43:20</div>
<svg class="a" style="left:887.1px;top:713.9999999999999px;" width="12" height="12" viewBox="0 0 12 12"><circle cx="5.4" cy="5.4" r="4.5" fill="none" stroke="#c0504d" stroke-width="1.6"/><path d="M5.4,2.8 V5.6 H3.6" fill="none" stroke="#c0504d" stroke-width="1.4"/></svg>
<div class="a t s" style="left:943.00px;top:709.5999999999999px;font-size:12px;line-height:20px;color:#303030;letter-spacing:0.341px;">6h</div>
<div class="a t s" style="left:980.00px;top:709.5999999999999px;font-size:12px;line-height:20px;color:#303030;letter-spacing:0.052px;">23.01.2020 10:59</div>
<div class="a t s" style="left:1100.00px;top:709.5999999999999px;font-size:12px;line-height:20px;color:#303030;letter-spacing:0.052px;">23.01.2020 16:59</div>
<div class="a t s" style="left:1340.00px;top:709.5999999999999px;font-size:12px;line-height:20px;color:#303030;">0</div>
<div class="a t s" style="left:250.50px;top:725.5px;font-size:12px;line-height:20px;color:#1d5d8d;letter-spacing:0.130px;">Kieber Uwe</div>
<div class="a t s" style="left:399.80px;top:725.5px;font-size:12px;line-height:20px;color:#1d5d8d;letter-spacing:0.193px;">_Arbeitsplatz - Drucker</div>
<div class="a t s" style="left:399.80px;top:741.4px;font-size:12px;line-height:20px;color:#1d5d8d;letter-spacing:0.435px;">und Kopierer</div>
<div class="a t s" style="left:550.50px;top:725.5px;font-size:12px;line-height:20px;color:#1d5d8d;letter-spacing:0.253px;">Drucker Kopierer</div>
<div class="a t s" style="left:700.00px;top:725.5px;font-size:12px;line-height:20px;color:#303030;letter-spacing:0.183px;">Standard 5x8</div>
<div class="a t s" style="left:850.10px;top:725.5px;font-size:12px;line-height:20px;color:#5cb85c;letter-spacing:0.017px;">26:59</div>
<svg class="a" style="left:883.4px;top:729.9px;" width="12" height="12" viewBox="0 0 12 12"><circle cx="5.4" cy="5.4" r="4.5" fill="none" stroke="#4cae4c" stroke-width="1.6"/><path d="M5.4,2.8 V5.6 H3.6" fill="none" stroke="#4cae4c" stroke-width="1.4"/></svg>
<div class="a t s" style="left:936.00px;top:725.5px;font-size:12px;line-height:20px;color:#303030;letter-spacing:0.334px;">40h</div>
<div class="a t s" style="left:980.00px;top:725.5px;font-size:12px;line-height:20px;color:#303030;letter-spacing:0.052px;">23.01.2020 10:59</div>
<div class="a t s" style="left:1100.00px;top:725.5px;font-size:12px;line-height:20px;color:#303030;letter-spacing:0.052px;">30.01.2020 10:59</div>
<div class="a t s" style="left:1340.00px;top:725.5px;font-size:12px;line-height:20px;color:#303030;">0</div>
<div class="a t s" style="left:250.50px;top:757.3px;font-size:12px;line-height:20px;color:#1d5d8d;letter-spacing:0.192px;">Marxer Kevin</div>
<div class="a t s" style="left:399.80px;top:757.3px;font-size:12px;line-height:20px;color:#1d5d8d;letter-spacing:0.193px;">_Arbeitsplatz - Drucker</div>
<div class="a t s" style="left:399.80px;top:773.1999999999999px;font-size:12px;line-height:20px;color:#1d5d8d;letter-spacing:0.435px;">und Kopierer</div>
<div class="a t s" style="left:550.50px;top:757.3px;font-size:12px;line-height:20px;color:#1d5d8d;letter-spacing:0.253px;">Drucker Kopierer</div>
<div class="a t s" style="left:700.00px;top:757.3px;font-size:12px;line-height:20px;color:#303030;letter-spacing:0.183px;">Standard 5x8</div>
<div class="a t s" style="left:850.10px;top:757.3px;font-size:12px;line-height:20px;color:#5cb85c;letter-spacing:0.017px;">26:59</div>
<svg class="a" style="left:883.4px;top:761.6999999999999px;" width="12" height="12" viewBox="0 0 12 12"><circle cx="5.4" cy="5.4" r="4.5" fill="none" stroke="#4cae4c" stroke-width="1.6"/><path d="M5.4,2.8 V5.6 H3.6" fill="none" stroke="#4cae4c" stroke-width="1.4"/></svg>
<div class="a t s" style="left:936.00px;top:757.3px;font-size:12px;line-height:20px;color:#303030;letter-spacing:0.334px;">40h</div>
<div class="a t s" style="left:980.00px;top:757.3px;font-size:12px;line-height:20px;color:#303030;letter-spacing:0.052px;">23.01.2020 10:59</div>
<div class="a t s" style="left:1100.00px;top:757.3px;font-size:12px;line-height:20px;color:#303030;letter-spacing:0.052px;">30.01.2020 10:59</div>
<div class="a t s" style="left:1340.00px;top:757.3px;font-size:12px;line-height:20px;color:#303030;">0</div>
<div class="a t s" style="left:250.50px;top:789.0999999999999px;font-size:12px;line-height:20px;color:#1d5d8d;letter-spacing:0.394px;">Matt Günter</div>
<div class="a t s" style="left:399.80px;top:789.0999999999999px;font-size:12px;line-height:20px;color:#1d5d8d;letter-spacing:0.193px;">_Arbeitsplatz - Drucker</div>
<div class="a t s" style="left:399.80px;top:804.9999999999999px;font-size:12px;line-height:20px;color:#1d5d8d;letter-spacing:0.435px;">und Kopierer</div>
<div class="a t s" style="left:550.50px;top:789.0999999999999px;font-size:12px;line-height:20px;color:#1d5d8d;letter-spacing:0.253px;">Drucker Kopierer</div>
<div class="a t s" style="left:700.00px;top:789.0999999999999px;font-size:12px;line-height:20px;color:#303030;letter-spacing:0.183px;">Standard 5x8</div>
<div class="a t s" style="left:850.10px;top:789.0999999999999px;font-size:12px;line-height:20px;color:#5cb85c;letter-spacing:0.017px;">26:59</div>
<svg class="a" style="left:883.4px;top:793.4999999999999px;" width="12" height="12" viewBox="0 0 12 12"><circle cx="5.4" cy="5.4" r="4.5" fill="none" stroke="#4cae4c" stroke-width="1.6"/><path d="M5.4,2.8 V5.6 H3.6" fill="none" stroke="#4cae4c" stroke-width="1.4"/></svg>
<div class="a t s" style="left:936.00px;top:789.0999999999999px;font-size:12px;line-height:20px;color:#303030;letter-spacing:0.334px;">40h</div>
<div class="a t s" style="left:980.00px;top:789.0999999999999px;font-size:12px;line-height:20px;color:#303030;letter-spacing:0.052px;">23.01.2020 10:59</div>
<div class="a t s" style="left:1100.00px;top:789.0999999999999px;font-size:12px;line-height:20px;color:#303030;letter-spacing:0.052px;">30.01.2020 10:59</div>
<div class="a t s" style="left:1340.00px;top:789.0999999999999px;font-size:12px;line-height:20px;color:#303030;">0</div>
<div class="a t s" style="left:250.50px;top:820.9px;font-size:12px;line-height:20px;color:#1d5d8d;letter-spacing:0.044px;">Näf Sandra</div>
<div class="a t s" style="left:399.80px;top:820.9px;font-size:12px;line-height:20px;color:#1d5d8d;letter-spacing:0.193px;">_Arbeitsplatz - Drucker</div>
<div class="a t s" style="left:399.80px;top:836.8px;font-size:12px;line-height:20px;color:#1d5d8d;letter-spacing:0.435px;">und Kopierer</div>
<div class="a t s" style="left:550.50px;top:820.9px;font-size:12px;line-height:20px;color:#1d5d8d;letter-spacing:0.253px;">Drucker Kopierer</div>
<div class="a t s" style="left:700.00px;top:820.9px;font-size:12px;line-height:20px;color:#303030;letter-spacing:0.183px;">Standard 5x8</div>
<div class="a t s" style="left:850.10px;top:820.9px;font-size:12px;line-height:20px;color:#5cb85c;letter-spacing:0.017px;">26:59</div>
<svg class="a" style="left:883.4px;top:825.3px;" width="12" height="12" viewBox="0 0 12 12"><circle cx="5.4" cy="5.4" r="4.5" fill="none" stroke="#4cae4c" stroke-width="1.6"/><path d="M5.4,2.8 V5.6 H3.6" fill="none" stroke="#4cae4c" stroke-width="1.4"/></svg>
<div class="a t s" style="left:936.00px;top:820.9px;font-size:12px;line-height:20px;color:#303030;letter-spacing:0.334px;">40h</div>
<div class="a t s" style="left:980.00px;top:820.9px;font-size:12px;line-height:20px;color:#303030;letter-spacing:0.052px;">23.01.2020 10:59</div>
<div class="a t s" style="left:1100.00px;top:820.9px;font-size:12px;line-height:20px;color:#303030;letter-spacing:0.052px;">30.01.2020 10:59</div>
<div class="a t s" style="left:1340.00px;top:820.9px;font-size:12px;line-height:20px;color:#303030;">0</div>
<svg class="a" style="left:230px;top:857.6999999999999px;" width="12" height="10" viewBox="0 0 12 10"><path d="M1.4,4.8 L4.4,7.8 L10.4,1.8" fill="none" stroke="#4cae4c" stroke-width="2.5" stroke-linecap="square"/></svg>
<div class="a t s" style="left:250.50px;top:852.6999999999999px;font-size:12px;line-height:20px;color:#1d5d8d;letter-spacing:0.166px;">Stocker Heimo</div>
<div class="a t s" style="left:399.80px;top:852.6999999999999px;font-size:12px;line-height:20px;color:#1d5d8d;letter-spacing:0.167px;">_Arbeitsplatz/Drucker VIP</div>
<div class="a t s" style="left:550.50px;top:852.6999999999999px;font-size:12px;line-height:20px;color:#1d5d8d;letter-spacing:-0.272px;">VIP</div>
<div class="a t s" style="left:700.00px;top:852.6999999999999px;font-size:12px;line-height:20px;color:#303030;letter-spacing:0.087px;">Spezial 7/24</div>
<div class="a t s" style="left:850.10px;top:852.6999999999999px;font-size:12px;line-height:20px;color:#c0504d;letter-spacing:-0.046px;">-43:20</div>
<svg class="a" style="left:887.1px;top:857.0999999999999px;" width="12" height="12" viewBox="0 0 12 12"><circle cx="5.4" cy="5.4" r="4.5" fill="none" stroke="#c0504d" stroke-width="1.6"/><path d="M5.4,2.8 V5.6 H3.6" fill="none" stroke="#c0504d" stroke-width="1.4"/></svg>
<div class="a t s" style="left:943.00px;top:852.6999999999999px;font-size:12px;line-height:20px;color:#303030;letter-spacing:0.341px;">6h</div>
<div class="a t s" style="left:980.00px;top:852.6999999999999px;font-size:12px;line-height:20px;color:#303030;letter-spacing:0.052px;">23.01.2020 10:59</div>
<div class="a t s" style="left:1100.00px;top:852.6999999999999px;font-size:12px;line-height:20px;color:#303030;letter-spacing:0.052px;">23.01.2020 16:59</div>
<div class="a t s" style="left:1340.00px;top:852.6999999999999px;font-size:12px;line-height:20px;color:#1d5d8d;">9</div>
<svg class="a" style="left:1349.4px;top:856.0999999999999px;" width="13" height="12" viewBox="0 0 13 12"><path d="M6.4,0.8 L12.6,11.8 H0.2 Z" fill="#c8902a"/><path d="M6.4,4.2 V8" stroke="#fff" stroke-width="1.4"/><circle cx="6.4" cy="9.8" r="0.75" fill="#fff"/></svg>
<svg class="a" style="left:229.4px;top:882px;" width="13" height="12" viewBox="0 0 13 12"><path d="M6.4,0.8 L12.6,11.8 H0.2 Z" fill="#c8902a"/><path d="M6.4,4.2 V8" stroke="#fff" stroke-width="1.4"/><circle cx="6.4" cy="9.8" r="0.75" fill="#fff"/></svg>
<div class="a t s" style="left:245.50px;top:879.2px;font-size:12px;line-height:20px;color:#303030;letter-spacing:0.071px;">Nächste Eskalation: 25.01.2020 17:01</div>
<div class="a" style="left:230px;top:905px;width:1180px;height:1.2px;background:#dddddd;"></div>
<div class="a" style="left:232px;top:916px;width:145px;height:28px;background:#eeeeee;border-radius:3px;"></div>
<div class="a t s" style="left:245.50px;top:919.8px;font-size:14px;line-height:20px;color:#303030;letter-spacing:0.075px;">Fenster schliessen</div>
</body></html>
